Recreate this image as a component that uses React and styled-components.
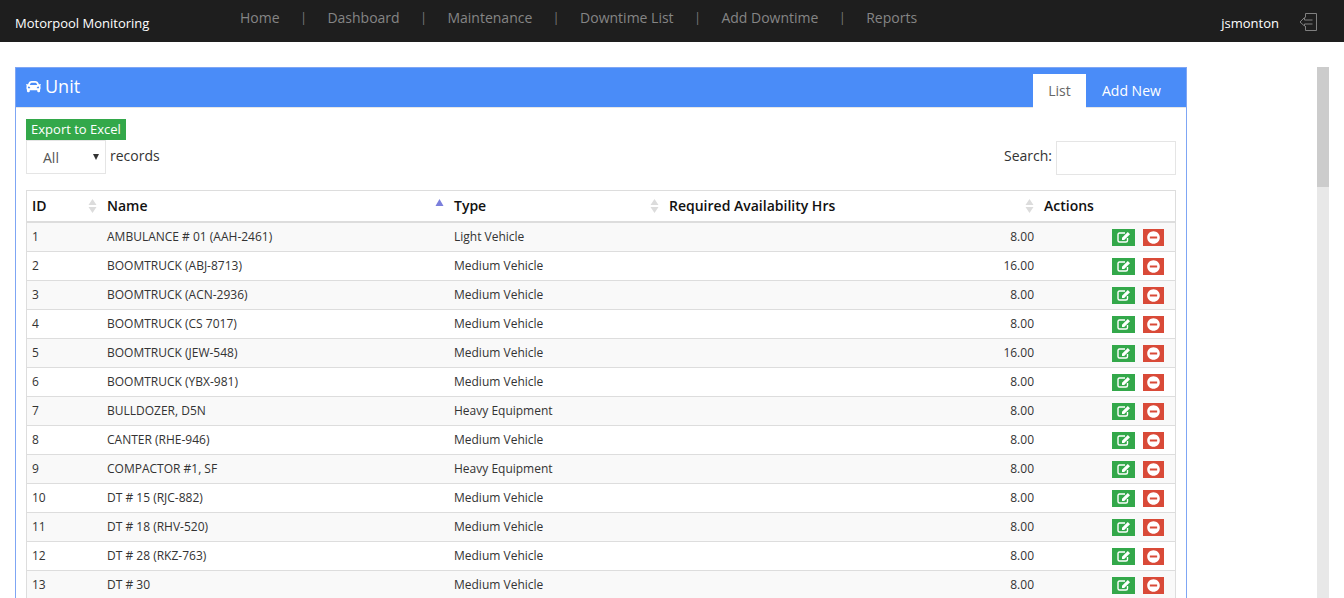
import React from "react";
import styled, { createGlobalStyle } from "styled-components";
import { FaCar, FaMinusCircle } from "react-icons/fa";

const Global = createGlobalStyle`
  html, body { margin: 0; padding: 0; height: 598px; overflow: hidden; background: #fff; }
  body { font-family: "Open Sans", sans-serif; color: #333; }
  * { box-sizing: border-box; }
`;
const Navbar = styled.header`
  height: 42px; background: #1e1e1e; display: flex; position: relative;
`;
const Brand = styled.div`
  width: 225px; padding: 14px 0 0 15px; color: #fff; font-size: 13px; font-weight: 500; line-height: 18px; white-space: nowrap;
`;
const NavList = styled.nav`
  display: flex; align-items: flex-start; padding-top: 8px; flex: 1; font-size: 14px; line-height: 19px; color: #858585;
`;
const NavLink = styled.span`padding: 0 15px;white-space: nowrap;`;
const NavSep = styled.span`width: 17.8px; text-align: center; color: #777; font-size: 13px;`;
const User = styled.div`
  display: flex; align-items: flex-start; padding: 14px 0 0; margin-right: 26px; color: #fff; font-size: 13px; line-height: 18px; font-weight: 400;
`;
const LogoutIcon = styled.svg`width: 19px; height: 19px; margin: -2px 0 0 20px; fill: none; stroke: #808080; stroke-width: 1;`;
const Content = styled.div`
  display: flex; padding: 25px 15px 0; align-items: flex-start;
`;
const Panel = styled.section`
  width: 1172px; flex: none; border: 1px solid #7fa6f4; border-bottom: 0; height: 531px; overflow: hidden;
`;
const PanelHead = styled.div`
  height: 40px; background: #4a8cf8; display: flex; justify-content: space-between; align-items: flex-end; border-bottom: 1px solid #e6e6e6; 
`;
const PanelTitle = styled.h2`
  margin: 0; align-self: flex-start; padding: 5px 0 0 10px; color: #fff; font-size: 18px; line-height: 26px; font-weight: 400; display: flex; align-items: center; gap: 4px;
`;
const Tabs = styled.div`display: flex; margin-bottom: -1px;`;
const Tab = styled.div`
  height: 34px; display: flex; align-items: center; justify-content: ${p => p.$active ? "center" : "flex-start"}; padding: 0 0 2px ${p => p.$active ? 0 : 16}px;
  font-size: 14px; width: ${p => p.$w}px; color: ${p => p.$active ? "#666" : "#fff"}; background: ${p => p.$active ? "#fff" : "transparent"};
`;
const PanelBody = styled.div`padding: 11px 10px 0;`;
const ExportBtn = styled.div`
  width: 100px; height: 21px; background: #33a84a; color: #fff; font-size: 13px; line-height: 20px; text-align: center; white-space: nowrap;
`;
const Controls = styled.div`display: flex; justify-content: space-between; align-items: flex-start; height: 50px;`;
const Left = styled.div`display: flex; align-items: flex-start; font-size: 14px;`;
const SelectBox = styled.div`
  width: 80px; height: 34px; border: 1px solid #e5e5e5; font-size: 14px; color: #555; padding: 7px 0 0 16px; line-height: 19px; position: relative;
`;
const Caret = styled.span`
  position: absolute; right: 6px; top: 13px; border-left: 3px solid transparent; border-right: 3px solid transparent; border-top: 6px solid #333;
`;
const RecordsLabel = styled.span`margin: 6px 0 0 4px; line-height: 19px;`;
const Right = styled.div`display: flex; align-items: flex-start; font-size: 14px; padding-top: 1px;`;
const SearchLabel = styled.span`margin: 5px 4px 0 0; line-height: 19px;`;
const SearchBox = styled.div`width: 120px; height: 34px; border: 1px solid #e5e5e5;`;
const Table = styled.table`
  width: 1150px; table-layout: fixed; border-collapse: separate; border-spacing: 0; border: 1px solid #ddd; border-bottom: 0; font-size: 12px;
`;
const Th = styled.th`
  height: 32px; padding: 0 5px 2px; text-align: left; font-size: 14px; font-weight: 600; color: #111; border-bottom: 2px solid #ddd; position: relative; line-height: 19px;
`;
const SortIcon = styled.svg`position: absolute; right: ${p => p.$r}px; top: ${p => p.$top}px; width: 9px; height: 16px;`;
const Tr = styled.tr`background: ${p => p.$odd ? "#f9f9f9" : "#fff"};`;
const Td = styled.td`
  height: 29px; padding: 0 5px; color: #333; border-bottom: 1px solid #ddd; line-height: 16px; white-space: nowrap;
  text-align: ${p => p.$right ? "right" : "left"};
`;
const ActionCell = styled.div`display: flex; justify-content: flex-end; gap: 8px; padding: 0 6px 0 0;`;
const ActionBtn = styled.span`
  width: ${p => p.$w}px; height: 17px; background: ${p => p.$bg}; color: #fff; display: flex; align-items: center; justify-content: center; font-size: ${p => p.$size}px;
`;
const EditIcon = styled.svg`width: 14px; height: 12px; fill: none; stroke: #fff;`;
const Scrollbar = styled.div`
  width: 12px; height: 531px; flex: none; margin-left: 130px; background: #e8e8e8;
`;
const Thumb = styled.div`height: 120px; background: #ccc;`;

const rows = [
  [1, "AMBULANCE # 01 (AAH-2461)", "Light Vehicle", "8.00"],
  [2, "BOOMTRUCK (ABJ-8713)", "Medium Vehicle", "16.00"],
  [3, "BOOMTRUCK (ACN-2936)", "Medium Vehicle", "8.00"],
  [4, "BOOMTRUCK (CS 7017)", "Medium Vehicle", "8.00"],
  [5, "BOOMTRUCK (JEW-548)", "Medium Vehicle", "16.00"],
  [6, "BOOMTRUCK (YBX-981)", "Medium Vehicle", "8.00"],
  [7, "BULLDOZER, D5N", "Heavy Equipment", "8.00"],
  [8, "CANTER (RHE-946)", "Medium Vehicle", "8.00"],
  [9, "COMPACTOR #1, SF", "Heavy Equipment", "8.00"],
  [10, "DT # 15 (RJC-882)", "Medium Vehicle", "8.00"],
  [11, "DT # 18 (RHV-520)", "Medium Vehicle", "8.00"],
  [12, "DT # 28 (RKZ-763)", "Medium Vehicle", "8.00"],
  [13, "DT # 30", "Medium Vehicle", "8.00"],
];
const nav = ["Home", "Dashboard", "Maintenance", "Downtime List", "Add Downtime", "Reports"];

const Sort = ({ r, active }) => (
  <SortIcon $r={r} $top={active ? 8 : 7} viewBox="0 0 9 16">
    {active
      ? <path d="M0.5 7 L4.5 0 L8.5 7 Z" fill="#7b7fdc" />
      : <><path d="M0.5 7 L4.5 1 L8.5 7 Z" fill="#dcdcdc" /><path d="M0.5 9 L8.5 9 L4.5 15 Z" fill="#dcdcdc" /></>}
  </SortIcon>
);

const PencilSquare = () => (
  <EditIcon viewBox="0 0 14 12">
    <path d="M8 2 H2.5 Q1 2 1 3.5 V9.5 Q1 11 2.5 11 H9 Q10.5 11 10.5 9.5 V7" strokeWidth="1.4" />
    <path d="M5 6.8 L10.8 1 L13 3.2 L7.2 9 H5 Z" fill="#fff" stroke="none" />
  </EditIcon>
);

export default function App() {
  return (
    <>
      <Global />
      <Navbar>
        <Brand>Motorpool Monitoring</Brand>
        <NavList>
          {nav.map((n, i) => (
            <React.Fragment key={n}>
              {i > 0 && <NavSep>|</NavSep>}
              <NavLink>{n}</NavLink>
            </React.Fragment>
          ))}
        </NavList>
        <User>
          jsmonton
          <LogoutIcon viewBox="0 0 19 19">
            <path d="M6.5 5.5 V1.5 H17.5 V18.5 H6.5 V14" />
            <path d="M13.5 8 H5.5 V5.5 L1 10 L5.5 14 V12 H13.5" />
          </LogoutIcon>
        </User>
      </Navbar>
      <Content>
        <Panel>
          <PanelHead>
            <PanelTitle><FaCar size={15} /> Unit</PanelTitle>
            <Tabs>
              <Tab $active $w={53}>List</Tab>
              <Tab $w={100}>Add New</Tab>
            </Tabs>
          </PanelHead>
          <PanelBody>
            <ExportBtn>Export to Excel</ExportBtn>
            <Controls>
              <Left>
                <SelectBox>All<Caret /></SelectBox>
                <RecordsLabel>records</RecordsLabel>
              </Left>
              <Right>
                <SearchLabel>Search:</SearchLabel>
                <SearchBox />
              </Right>
            </Controls>
            <Table>
              <colgroup>
                <col style={{ width: 75 }} /><col style={{ width: 347 }} /><col style={{ width: 215 }} /><col style={{ width: 375 }} /><col />
              </colgroup>
              <thead>
                <tr>
                  <Th>ID<Sort r={5} /></Th>
                  <Th>Name<Sort r={5} active /></Th>
                  <Th>Type<Sort r={5} /></Th>
                  <Th>Required Availability Hrs<Sort r={5} /></Th>
                  <Th>Actions</Th>
                </tr>
              </thead>
              <tbody>
                {rows.map((r, i) => (
                  <Tr key={r[0]} $odd={i % 2 === 0}>
                    <Td>{r[0]}</Td>
                    <Td>{r[1]}</Td>
                    <Td>{r[2]}</Td>
                    <Td $right>{r[3]}</Td>
                    <Td>
                      <ActionCell>
                        <ActionBtn $w={23} $size={13} $bg="#33a84a"><PencilSquare /></ActionBtn>
                        <ActionBtn $w={21} $size={13} $bg="#d94a38"><FaMinusCircle /></ActionBtn>
                      </ActionCell>
                    </Td>
                  </Tr>
                ))}
              </tbody>
            </Table>
          </PanelBody>
        </Panel>
        <Scrollbar><Thumb /></Scrollbar>
      </Content>
    </>
  );
}
